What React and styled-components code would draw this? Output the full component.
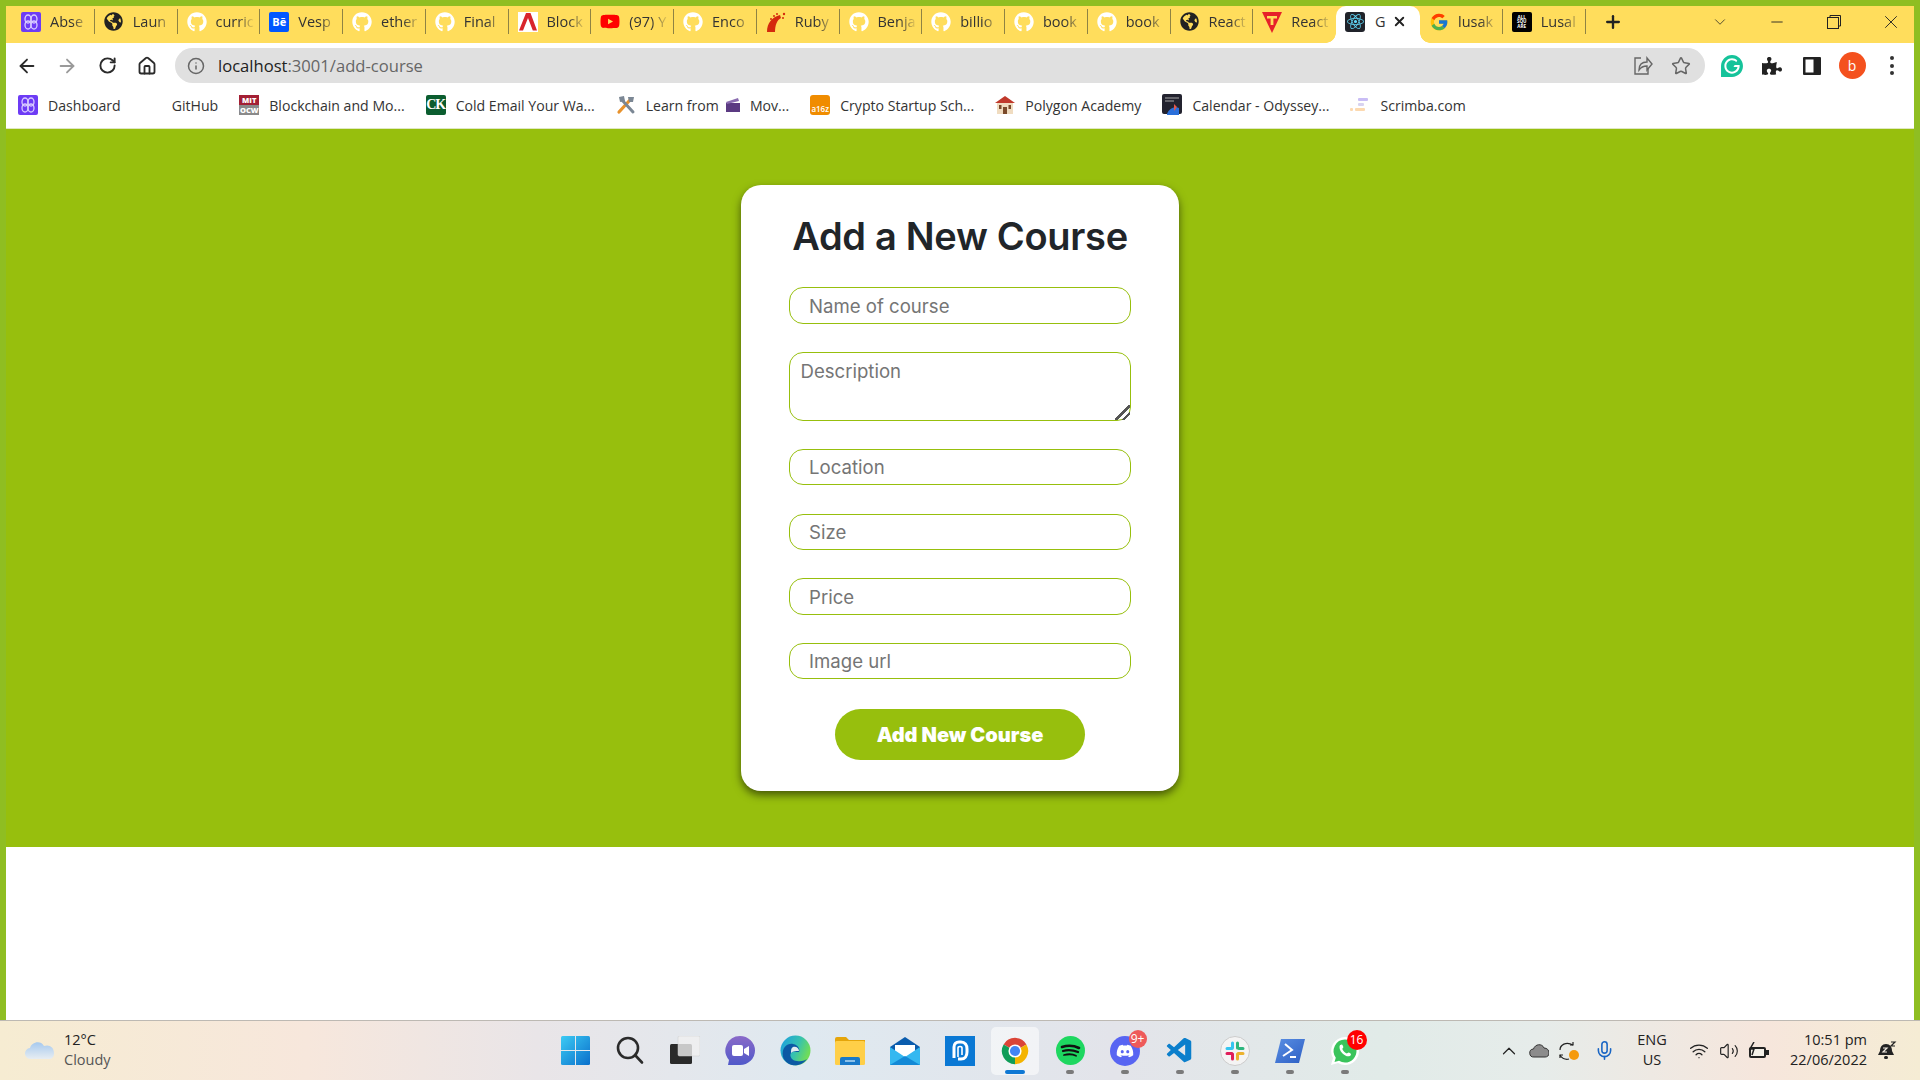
import React from 'react';
import styled, { createGlobalStyle } from 'styled-components';
import { FaGithub, FaGlobeAmericas, FaYoutube, FaPuzzlePiece, FaDiscord } from 'react-icons/fa';
import { FcGoogle } from 'react-icons/fc';
import { SiReact, SiGrammarly } from 'react-icons/si';
import { VscVscode } from 'react-icons/vsc';
import { ArrowLeft, ArrowRight, RotateCw, Home, Info, Star, ChevronUp, ChevronDown, Minus, X, Plus, Mic, Wifi, Volume2 } from 'lucide-react';

const UI = '"Open Sans", "Noto Sans", "Liberation Sans", sans-serif';
const FORM = 'Inter, "Open Sans", "Liberation Sans", sans-serif';

const Global = createGlobalStyle`
  html, body { margin: 0; padding: 0; background: #fff; }
  * { box-sizing: border-box; }
  body { font-family: ${UI}; }
`;

const Screen = styled.div`
  width: 1920px; height: 1080px; overflow: hidden;
  display: flex; flex-direction: column;
`;
const Window = styled.div`
  flex: 1; min-height: 0; padding: 6px 6px 0; background: #8fbe22;
  display: flex; flex-direction: column;
`;
const TabStrip = styled.div`
  height: 37px; background: #ffdd5c; padding: 3px 0 0 6px;
  display: flex; align-items: flex-start; flex: none;
`;
const Tab = styled.div`
  flex: 0 0 82.75px; height: 25px; padding-left: 9px;
  display: flex; align-items: center; gap: 9px;
  border-right: 1px solid ${p => (p.$last ? 'transparent' : '#8f8343')};
`;
const ActiveTab = styled.div`
  flex: 0 0 84px; align-self: stretch; margin-top: -3px; background: #fff; position: relative;
  border-radius: 10px 10px 0 0; padding: 0 0 6px 9px;
  display: flex; align-items: center; gap: 10px; color: #333; font-size: 14.5px;
  &::before, &::after { content: ''; position: absolute; bottom: 0; width: 10px; height: 10px; }
  &::before { left: -10px; background: radial-gradient(circle at 0 0, transparent 9.5px, #fff 10px); }
  &::after { right: -10px; background: radial-gradient(circle at 100% 0, transparent 9.5px, #fff 10px); }
`;
const Fav = styled.span`
  width: 20px; height: 20px; flex: none; display: flex; align-items: center; justify-content: center;
`;
const TabText = styled.span`
  flex: 1; min-width: 0; overflow: hidden; white-space: nowrap; font-size: 14.5px; color: #333; margin-right: 4px;
  -webkit-mask-image: linear-gradient(90deg, #000 55%, transparent 100%);
  mask-image: linear-gradient(90deg, #000 55%, transparent 100%);
`;
const ActiveClose = styled.span`
  display: flex; margin-left: -4px; color: #222;
`;
const NewTab = styled.span`
  display: flex; align-items: center; height: 25px; margin-left: 17px; color: #222;
`;
const Spacer = styled.div` flex: 1; `;
const WinControls = styled.div`
  display: flex; gap: 11px; align-items: center; height: 25px; color: #222;
`;
const WinButton = styled.span`
  width: 46px; display: flex; justify-content: center;
`;
const Toolbar = styled.div`
  height: 45px; background: #fff; display: flex; align-items: center; padding: 0 2px 0 1px; flex: none;
`;
const NavButton = styled.span`
  width: 40px; height: 40px; flex: none; display: flex; align-items: center; justify-content: center;
  color: ${p => p.$dim ? '#9a9a9a' : '#2b2b2b'};
`;
const Omnibox = styled.div`
  flex: 1; height: 35px; margin: 0 7px 0 8px; border-radius: 18px; background: #e0e0e0;
  display: flex; align-items: center; padding: 0 14px 0 12px; gap: 13px; font-size: 16.6px; color: #666;
`;
const Host = styled.span` color: #222; `;
const UrlText = styled.span` flex: 1; white-space: nowrap; `;
const OmniRight = styled.div`
  display: flex; align-items: center; gap: 18px; color: #666;
`;
const Avatar = styled.span`
  width: 27px; height: 27px; border-radius: 50%; background: #f4511e; color: #fff;
  display: flex; align-items: center; justify-content: center; font-size: 14px;
`;
const Dots = styled.span`
  display: flex; flex-direction: column; gap: 3.5px;
  & i { width: 4px; height: 4px; border-radius: 50%; background: #333; display: block; }
`;
const Bookmarks = styled.div`
  height: 41px; background: #fff; display: flex; align-items: center; padding: 0 0 6px 12px; gap: 21px; flex: none;
  border-bottom: 1px solid #dfe8c0;
`;
const Bookmark = styled.div`
  display: flex; align-items: center; gap: 10px; font-size: 14.1px; color: #333; white-space: nowrap;
  margin-left: ${p => p.$tight ? '-14px' : '0'};
`;
const Page = styled.main`
  background: #97bf0d; padding: 56px 0; display: flex; justify-content: center; flex: none;
`;
const Blank = styled.div` flex: 1; background: #fff; `;
const Card = styled.form`
  width: 438px; height: 606px; background: #fff; border-radius: 20px;
  box-shadow: 0 4px 8px rgba(0,0,0,.55);
  padding: 28px 48px 31px; display: flex; flex-direction: column; align-items: stretch;
`;
const Title = styled.h1`
  margin: 0 0 28px; height: 46px; text-align: center; white-space: nowrap;
  font: 600 38px/46px ${FORM}; color: #212529; letter-spacing: -0.3px;
`;
const TextInput = styled.input`
  height: ${p => p.$h}px; flex: none; width: 100%; border: 1.5px solid #97bf0d; border-radius: 14px; outline: none;
  padding: 0 19px; font: 400 18.6px ${FORM}; margin-bottom: ${p => p.$mb}px; background: #fff;
  &::placeholder { color: #757575; opacity: 1; }
`;
const TextArea = styled.textarea`
  height: 69px; flex: none; width: 100%; border: 1.5px solid #97bf0d; border-radius: 14px; outline: none;
  padding: 5px 10.5px; font: 400 18.6px/26px ${FORM}; margin: 0 0 28px; display: block; background: #fff;
  &::placeholder { color: #757575; opacity: 1; }
  &::-webkit-resizer {
    background: linear-gradient(135deg, transparent 45%, #555 45%, #555 58%, transparent 58%, transparent 70%, #555 70%, #555 83%, transparent 83%);
  }
`;
const Submit = styled.button`
  width: 250px; height: 51px; flex: none; align-self: center; border: 0; border-radius: 26px; background: #97bf0d; color: #fff;
  font: 900 20px ${FORM}; letter-spacing: 0;
`;
const Taskbar = styled.footer`
  height: 60px; flex: none; border-top: 1px solid #bdb9b3;
  background: linear-gradient(90deg, #f6ecd2 0%, #f7e7dc 16%, #e9e5e8 28%, #dfe9f0 42%, #e3e4ea 58%, #e1ebe8 72%, #e6ecea 80%, #f6e6dc 92%, #f5ecd4 100%);
  display: grid; grid-template-columns: 1fr auto 1fr; align-items: center;
`;
const Weather = styled.div`
  display: flex; align-items: center; gap: 9px; padding: 0 0 2px 25px; font-size: 14.5px; line-height: 20px;
`;
const WeatherText = styled.div` color: #222; & small { display: block; font-size: 14.5px; color: #555; } `;
const Dock = styled.div` display: flex; `;
const DockItem = styled.div`
  width: 55px; height: 48px; position: relative; display: flex; align-items: center; justify-content: center;
  &::before {
    content: ''; position: absolute; inset: 0 3.5px; border-radius: 5px;
    background: ${p => p.$active ? 'rgba(255,255,255,.55)' : 'transparent'};
  }
  &::after {
    content: ''; position: absolute; bottom: 1px; left: 50%; transform: translateX(-50%);
    height: 4px; border-radius: 2px; width: ${p => p.$active ? '20px' : '8px'};
    background: ${p => p.$active ? '#0f78d4' : p.$running ? '#7a7a7a' : 'transparent'};
  }
  & > svg { position: relative; z-index: 1; }
`;
const Badge = styled.span`
  position: absolute; z-index: 2; top: 3px; right: 6px; width: ${p => p.$s}px; height: ${p => p.$s}px; border-radius: 50%;
  background: ${p => p.$c}; color: #fff; font-size: 12px; line-height: ${p => p.$s}px; text-align: center;
`;
const Tray = styled.div`
  display: flex; align-items: center; justify-content: flex-end; color: #222; font-size: 14.5px; line-height: 20px; padding-right: 13px;
`;
const TraySlot = styled.span`
  width: ${p => p.$w}px; display: flex; justify-content: center; flex: none;
`;
const Lang = styled.span` display: block; width: 44px; margin: 0 10px 0 6px; text-align: center; padding-bottom: 2px; `;
const Clock = styled.div` width: 93px; text-align: right; padding-bottom: 2px; white-space: nowrap; `;
const Sq = styled.span`
  width: ${p => p.$s || 20}px; height: ${p => p.$s || 20}px; background: ${p => p.$bg}; color: ${p => p.$c || '#fff'}; border-radius: ${p => p.$r || 2}px;
  display: flex; align-items: center; justify-content: center; font: 700 ${p => p.$f || 11}px/1 ${UI}; overflow: hidden; text-align: center; flex: none;
`;
const CkBadge = styled(Sq)` font-family: "Liberation Serif", serif; letter-spacing: -1px; `;
const A16z = styled(Sq)` align-items: flex-end; padding-bottom: 2px; font-weight: 600; border-radius: 3px; `;
const MitMark = styled.span`
  width: 20px; height: 20px; flex: none; display: grid; grid-template-rows: 1fr 1fr; color: #fff; text-align: center;
  font: 800 7.5px/10px ${UI};
  & b { background: #a31f34; } & i { background: #8a8a8a; font-style: normal; }
`;

const Gh = () => <FaGithub size={20} color="#fff" />;
const Globe = () => <FaGlobeAmericas size={19} color="#222" />;
const Mark = () => <svg width="20" height="20" viewBox="0 0 20 20"><rect width="20" height="20" rx="2" fill="#6d3bf5"/><g fill="none" stroke="#d9ccff" strokeWidth="1.3"><ellipse cx="7" cy="7" rx="3" ry="4"/><ellipse cx="13" cy="7" rx="3" ry="4"/><ellipse cx="7" cy="13" rx="3" ry="4"/><ellipse cx="13" cy="13" rx="3" ry="4"/></g></svg>;
const Anchor = () => <svg width="20" height="20" viewBox="0 0 20 20"><rect width="20" height="20" fill="#fff"/><path d="M8 1h4.500L19 18.500h-4.200L10 6 5 18.500H1z" fill="#d8252b"/></svg>;
const TLogo = () => <svg width="20" height="22" viewBox="0 0 20 22"><path d="M0 1h20L10 22z" fill="#e6212a"/><path d="M5 5h10v2.500h-3.600V14H8.600V7.500H5z" fill="#ffdd5c"/></svg>;
const Rails = () => <svg width="20" height="20" viewBox="0 0 20 20"><path d="M1 20C1 11 6 5 14 3l1 3c-4 2-6 7-6 14z" fill="#d42a0d"/><g fill="#d42a0d"><circle cx="8" cy="4" r="1"/><circle cx="11" cy="2" r="1"/><circle cx="18" cy="2" r="1.200"/><circle cx="17" cy="6" r="1"/><circle cx="5" cy="7" r="1"/></g></svg>;
const ReactIco = () => <Sq $bg="#20232a" $r={3}><SiReact size={17} color="#61dafb" /></Sq>;
const AllSquare = () => <Sq $bg="#000" $f={4.6}>ALL<br/>SQU<br/>ARE</Sq>;

const tabs = [
  [<Mark />, 'Abse'], [<Globe />, 'Laun'], [<Gh />, 'curric'],
  [<Sq $bg="#0057ff" $f={11}>Bē</Sq>, 'Vesp'], [<Gh />, 'ether'], [<Gh />, 'Final'],
  [<Anchor />, 'Block'], [<FaYoutube size={21} color="#f00" />, '(97) Y'], [<Gh />, 'Enco'],
  [<Rails />, 'Ruby'], [<Gh />, 'Benja'], [<Gh />, 'billio'],
  [<Gh />, 'book'], [<Gh />, 'book'], [<Globe />, 'React'], [<TLogo />, 'React'],
];

const Bars = () => <svg width="20" height="20" viewBox="0 0 20 20"><rect width="20" height="20" fill="#fff"/></svg>;
const Tools = () => <svg width="20" height="20" viewBox="0 0 20 20"><path d="M3 17 14 5" stroke="#e8922c" strokeWidth="3.200" strokeLinecap="round"/><path d="M17 17 6 5" stroke="#7b8794" strokeWidth="3" strokeLinecap="round"/><path d="M3 2 8 1 9 6 4 7z" fill="#7b8794"/><path d="M12 2h6l-1 5-4 0z" fill="#7b8794"/></svg>;
const Clap = () => <svg width="14" height="14" viewBox="0 0 14 14"><rect y="5" width="14" height="9" fill="#5b3a82"/><path d="M0 4 12 0l1 3L1 6z" fill="#8a6cb0"/></svg>;
const House = () => <svg width="20" height="20" viewBox="0 0 20 20"><path d="M10 1 0 8h20z" fill="#c0392b"/><rect x="2" y="8" width="16" height="11" fill="#f0dcc0"/><rect x="8" y="12" width="4" height="7" fill="#7a4a2a"/><rect x="4" y="10" width="2.500" height="4" fill="#7a4a2a"/><rect x="13.500" y="10" width="2.500" height="4" fill="#7a4a2a"/></svg>;
const Book = () => <svg width="20" height="22" viewBox="0 0 20 22"><rect width="20" height="20" rx="2" fill="#23232f"/><path d="M3 4h14M3 7h9" stroke="#aaa"/><path d="M5 20c2-6 8-8 12-6v7H5z" fill="#2a6fdb"/><path d="M12 10l3 3-3 4z" fill="#e2574c"/></svg>;
const Scrimba = () => <svg width="20" height="14" viewBox="0 0 20 14"><rect x="8" y="0" width="10" height="3" rx="1" fill="#c9bdf5"/><rect x="8" y="5" width="6" height="3" rx="1" fill="#d8d3f0"/><rect x="5" y="10" width="10" height="3" rx="1" fill="#fcd9b0"/><rect x="0" y="10" width="3" height="3" rx="1" fill="#fcd9b0"/></svg>;

const Share = () => <svg width="20" height="20" viewBox="0 0 20 20" fill="none" stroke="#666" strokeWidth="1.400"><path d="M8 2H2v16h13v-6"/><path d="M6 14c0-6 4-8 8-8V2l5 6-5 6v-4c-4 0-6 1-8 4z"/></svg>;
const SidePanel = () => <svg width="18" height="18" viewBox="0 0 18 18"><rect width="18" height="18" rx="1" fill="#222"/><rect x="2.500" y="2.500" width="8" height="13" fill="#fff"/></svg>;

const Win = () => <svg width="29" height="29" viewBox="0 0 29 29"><defs><linearGradient id="w" x1="0" y1="0" x2="1" y2="1"><stop offset="0" stopColor="#3ccbf4"/><stop offset="1" stopColor="#0a6fcb"/></linearGradient></defs><rect width="29" height="29" fill="url(#w)" rx="1.500"/><path d="M14.500 0v29M0 14.500h29" stroke="#e4e8ec" strokeWidth="1"/></svg>;
const Search = () => <svg width="28" height="29" viewBox="0 0 28 29" fill="none" stroke="#2b2b2b" strokeWidth="2.600"><circle cx="12" cy="12" r="10"/><path d="M19 19l7 7.500" strokeLinecap="round"/></svg>;
const TaskView = () => <svg width="30" height="29" viewBox="0 0 30 29"><rect x="0" y="8" width="22" height="20" rx="1.500" fill="#2a2a2a"/><rect x="8" y="0" width="22" height="20" rx="1.500" fill="#f0f0f0" fillOpacity=".8" stroke="#ccc" strokeWidth=".5"/></svg>;
const Teams = () => <svg width="30" height="30" viewBox="0 0 30 30"><defs><linearGradient id="t" x1="0" y1="0" x2="0" y2="1"><stop offset="0" stopColor="#8a6ac8"/><stop offset="1" stopColor="#5059c9"/></linearGradient></defs><path d="M15 0a15 14.500 0 0 1 0 29H3l1-5A14.500 14.500 0 0 1 15 0z" fill="url(#t)"/><rect x="7" y="9" width="11" height="11" rx="2" fill="#fff"/><path d="M19 13l5-3v10l-5-3z" fill="#fff"/></svg>;
const Edge = () => <svg width="31" height="31" viewBox="0 0 31 31"><defs><linearGradient id="e" x1="0" y1="0" x2="1" y2=".4"><stop offset="0" stopColor="#1b9de2"/><stop offset=".6" stopColor="#35c1b1"/><stop offset="1" stopColor="#6fdc5a"/></linearGradient></defs><circle cx="15.500" cy="15.500" r="15" fill="url(#e)"/><path d="M3 22C1 12 8 8 13 9c6 1 7 6 6 8-3 0-6-1-8 1-2 3 1 8 6 8 5 1 8-1 10-2-4 6-11 7-15 6-5-1-8-5-9-8z" fill="#0c59a4"/><path d="M13 12c3-1 6 1 6 4-3 0-6 0-8 2 0-3 0-5 2-6z" fill="#e2ecef"/></svg>;
const Files = () => <svg width="30" height="28" viewBox="0 0 30 28"><path d="M0 2a2 2 0 0 1 2-2h9l3 3h16v4H0z" fill="#e5a50a"/><rect y="4" width="30" height="24" rx="1.500" fill="#ffcf48"/><path d="M5 28v-6a2 2 0 0 1 2-2h16a2 2 0 0 1 2 2v6z" fill="#1979c9"/><path d="M10 24h10" stroke="#bde0f7" strokeWidth="1.400"/></svg>;
const Mail = () => <svg width="30" height="28" viewBox="0 0 30 28"><path d="M15 0 30 10v18H0V10z" fill="#0a5cad"/><path d="M5 8h20v7l-10 6-10-6z" fill="#fff"/><path d="M0 10l15 10 15-10v18H0z" fill="#35b8f0"/><path d="M0 28l15-9 15 9z" fill="#1389d6"/></svg>;
const Store = () => <svg width="30" height="30" viewBox="0 0 30 30"><rect width="30" height="30" fill="#0a78d4"/><path d="M9 22V11c0-3 2-5 5-5h2c4 0 6 3 6 7v3c0 4-2 7-6 7h-3" fill="none" stroke="#fff" strokeWidth="3"/><path d="M13 21V12c0-2 4-2 4 0v7" fill="none" stroke="#fff" strokeWidth="1.600"/></svg>;
const Chrome = () => <svg width="28" height="28" viewBox="0 0 32 32"><path d="M16 16 3 8.500A15 15 0 0 1 29 8.500Z" fill="#db4437"/><path d="M16 16 29 8.500A15 15 0 0 1 16 31Z" fill="#f4b400"/><path d="M16 16 16 31A15 15 0 0 1 3 8.500Z" fill="#0f9d58"/><circle cx="16" cy="16" r="7.500" fill="#fff"/><circle cx="16" cy="16" r="5.800" fill="#4285f4"/></svg>;
const Spotify = () => <svg width="29" height="29" viewBox="0 0 29 29"><circle cx="14.500" cy="14.500" r="14.500" fill="#1ed760"/><g fill="none" stroke="#111" strokeLinecap="round"><path d="M6 11c6-2 12-1.500 17 1" strokeWidth="2.600"/><path d="M7 15c5-1.500 10-1 15 1" strokeWidth="2.200"/><path d="M8 19c4-1 9-.8 12 .8" strokeWidth="1.800"/></g></svg>;
const DiscordIco = () => <svg width="30" height="30" viewBox="0 0 30 30"><circle cx="15" cy="15" r="15" fill="#5865f2"/><foreignObject x="6" y="6" width="18" height="18"><FaDiscord size={18} color="#fff" /></foreignObject></svg>;
const SlackIco = () => <svg width="30" height="30" viewBox="0 0 30 30"><circle cx="15" cy="15" r="14.500" fill="#f4f4f4" stroke="#ccc"/><g fill="none" strokeWidth="3" strokeLinecap="round"><path d="M12.500 7v5M7 12.500h5" stroke="#36c5f0"/><path d="M17.500 7v5M23 12.500h-4" stroke="#2eb67d"/><path d="M17.500 23v-5M23 17.500h-5" stroke="#ecb22e"/><path d="M12.500 23v-5M7 17.500h5" stroke="#e01e5a"/></g></svg>;
const Ps = () => <svg width="30" height="24" viewBox="0 0 30 24"><defs><linearGradient id="p" x1="0" y1="0" x2="1" y2="1"><stop offset="0" stopColor="#5a8fe3"/><stop offset="1" stopColor="#2d5fc4"/></linearGradient></defs><path d="M6 0h24l-6 24H0z" fill="url(#p)"/><path d="M10 5l7 6-9 6M15 18h6" fill="none" stroke="#fff" strokeWidth="2"/></svg>;
const Wa = () => <svg width="30" height="30" viewBox="0 0 30 30"><path d="M15 1a14 14 0 0 1 0 28 14 14 0 0 1-7-2l-7 2 2-7A14 14 0 0 1 15 1z" fill="#fff"/><path d="M15 3.500a11.500 11.500 0 0 1 0 23 11.500 11.500 0 0 1-6-1.700l-4.500 1.300 1.300-4.400A11.500 11.500 0 0 1 15 3.500z" fill="#3ac45c"/><path d="M10.500 9c1-1 2-.7 2.500 1l.3 1c0 1-1 1.500-1 2 1 2 2.500 3.500 4.500 4.500.5 0 1-1 2-1l1.500.7c1 .8.800 2-.5 2.800-2 1-5-.3-7.500-2.800-2.500-2.500-3.500-6-2.300-8.200z" fill="#fff"/></svg>;
const Cloud = () => <svg width="30" height="20" viewBox="0 0 30 20"><defs><linearGradient id="c" x1="0" y1="0" x2="0" y2="1"><stop offset="0" stopColor="#a6c9ee"/><stop offset="1" stopColor="#e7edf2"/></linearGradient></defs><path d="M6 19a5.500 5.500 0 0 1-1-11c1-5 10-9 14-2 5-2 10 1 10 7 0 4-2 6-5 6z" fill="url(#c)"/></svg>;
const OneDrive = () => <svg width="20" height="14" viewBox="0 0 20 14"><path d="M5 13a4 4 0 0 1-.5-8C6 0 13-1 15 4c3 0 5 2 5 5s-2 4-4 4z" fill="#8c8c8c" stroke="#333"/></svg>;
const Sync = () => <svg width="21" height="20" viewBox="0 0 21 20"><g fill="none" stroke="#222" strokeWidth="1.200"><path d="M1 9c0-5 6-9 13-5"/><path d="M14 1v3h-3M10 18c-4 1-8-1-9-4"/><path d="M1 17v-3h3"/></g><circle cx="15" cy="14" r="5" fill="#f59a0c"/></svg>;
const Battery = () => <svg width="22" height="18" viewBox="0 0 22 18"><rect x="1" y="5" width="17" height="11" rx="2" fill="#222"/><rect x="18" y="8" width="3" height="5" fill="#222"/><rect x="3" y="7" width="13" height="7" fill="#f4f0e8"/><path d="M6 0 2 7h4l-2 6" fill="none" stroke="#222" strokeWidth="1.500"/></svg>;
const Bell = () => <svg width="20" height="20" viewBox="0 0 20 20"><path d="M9 3c4 0 6 3 6 7l2 4H1l2-4c0-4 2-7 6-7z" fill="#222"/><rect x="7" y="15" width="4" height="3" rx="1.500" fill="#222"/><path d="M6 7h4l-4 4h4" stroke="#f3ece2" strokeWidth="1.200" fill="none"/><path d="M14 1h4l-4 4h4" stroke="#222" strokeWidth="1.200" fill="none"/></svg>;

const dock = [
  { i: <Win /> }, { i: <Search /> }, { i: <TaskView /> }, { i: <Teams /> }, { i: <Edge /> },
  { i: <Files /> }, { i: <Mail /> }, { i: <Store /> }, { i: <Chrome />, active: true },
  { i: <Spotify />, run: true },
  { i: <DiscordIco />, run: true, badge: '9+', c: '#ee5a5a', s: 18 },
  { i: <VscVscode size={30} color="#0b7fcc" />, run: true },
  { i: <SlackIco />, run: true }, { i: <Ps />, run: true },
  { i: <Wa />, run: true, badge: '16', c: '#f00', s: 20 },
];

export default function App() {
  return (
    <Screen>
      <Global />
      <Window>
        <TabStrip>
          {tabs.map(([ico, t], n) => (
            <Tab key={n} $last={n === tabs.length - 1}><Fav>{ico}</Fav><TabText>{t}</TabText></Tab>
          ))}
          <ActiveTab>
            <ReactIco /><span>G</span>
            <ActiveClose><X size={15} strokeWidth={3} /></ActiveClose>
          </ActiveTab>
          <Tab><Fav><FcGoogle size={20} /></Fav><TabText>lusak</TabText></Tab>
          <Tab><Fav><AllSquare /></Fav><TabText>Lusal</TabText></Tab>
          <NewTab><Plus size={20} strokeWidth={2.8} /></NewTab>
          <Spacer />
          <WinControls>
            <WinButton><ChevronDown size={18} strokeWidth={1} /></WinButton>
            <WinButton><Minus size={18} strokeWidth={1.2} /></WinButton>
            <WinButton>
              <svg width="14" height="14" viewBox="0 0 14 14" fill="none" stroke="#222"><rect x=".5" y="2.500" width="11" height="11"/><path d="M3 2.500V.5h10.500V11h-2"/></svg>
            </WinButton>
            <WinButton><X size={22} strokeWidth={1} /></WinButton>
          </WinControls>
        </TabStrip>
        <Toolbar>
          <NavButton><ArrowLeft size={22} strokeWidth={2} /></NavButton>
          <NavButton $dim><ArrowRight size={22} strokeWidth={2} /></NavButton>
          <NavButton><RotateCw size={19} strokeWidth={2.4} /></NavButton>
          <NavButton><Home size={20} strokeWidth={2.2} /></NavButton>
          <Omnibox>
            <Info size={18} strokeWidth={2} />
            <UrlText><Host>localhost</Host>:3001/add-course</UrlText>
            <OmniRight><Share /><Star size={20} strokeWidth={1.8} /></OmniRight>
          </Omnibox>
          <NavButton><SiGrammarly size={22} color="#15c39a" /></NavButton>
          <NavButton><FaPuzzlePiece size={20} color="#222" /></NavButton>
          <NavButton><SidePanel /></NavButton>
          <NavButton><Avatar>b</Avatar></NavButton>
          <NavButton><Dots><i /><i /><i /></Dots></NavButton>
        </Toolbar>
        <Bookmarks>
          <Bookmark><Mark />Dashboard</Bookmark>
          <Bookmark><Bars />GitHub</Bookmark>
          <Bookmark><MitMark><b>MIT</b><i>OCW</i></MitMark>Blockchain and Mo...</Bookmark>
          <Bookmark><CkBadge $bg="#0b5d2f" $f={14}>CK</CkBadge>Cold Email Your Wa...</Bookmark>
          <Bookmark><Tools />Learn from</Bookmark>
          <Bookmark $tight><Clap />Mov...</Bookmark>
          <Bookmark><A16z $bg="#f08c00" $f={8}>a16z</A16z>Crypto Startup Sch...</Bookmark>
          <Bookmark><House />Polygon Academy</Bookmark>
          <Bookmark><Book />Calendar - Odyssey...</Bookmark>
          <Bookmark><Scrimba />Scrimba.com</Bookmark>
        </Bookmarks>
        <Page>
          <Card onSubmit={e => e.preventDefault()}>
            <Title>Add a New Course</Title>
            <TextInput placeholder="Name of course" $h={37} $mb={28} />
            <TextArea placeholder="Description" />
            <TextInput placeholder="Location" $h={36} $mb={29} />
            <TextInput placeholder="Size" $h={36} $mb={28} />
            <TextInput placeholder="Price" $h={37} $mb={28} />
            <TextInput placeholder="Image url" $h={36} $mb={30} />
            <Submit type="submit">Add New Course</Submit>
          </Card>
        </Page>
        <Blank />
      </Window>
      <Taskbar>
        <Weather>
          <Cloud />
          <WeatherText>12°C<small>Cloudy</small></WeatherText>
        </Weather>
        <Dock>
          {dock.map((d, n) => (
            <DockItem key={n} $active={d.active} $running={d.run}>
              {d.i}
              {d.badge && <Badge $c={d.c} $s={d.s}>{d.badge}</Badge>}
            </DockItem>
          ))}
        </Dock>
        <Tray>
          <TraySlot $w={30}><ChevronUp size={22} strokeWidth={1.3} /></TraySlot>
          <TraySlot $w={30}><OneDrive /></TraySlot>
          <TraySlot $w={30}><Sync /></TraySlot>
          <TraySlot $w={40}><Mic size={21} color="#1a66c4" strokeWidth={1.8} /></TraySlot>
          <Lang>ENG<br />US</Lang>
          <TraySlot $w={30}><Wifi size={20} strokeWidth={1.6} /></TraySlot>
          <TraySlot $w={30}><Volume2 size={20} strokeWidth={1.4} /></TraySlot>
          <TraySlot $w={30}><Battery /></TraySlot>
          <Clock>10:51 pm<br />22/06/2022</Clock>
          <TraySlot $w={40}><Bell /></TraySlot>
        </Tray>
      </Taskbar>
    </Screen>
  );
}
